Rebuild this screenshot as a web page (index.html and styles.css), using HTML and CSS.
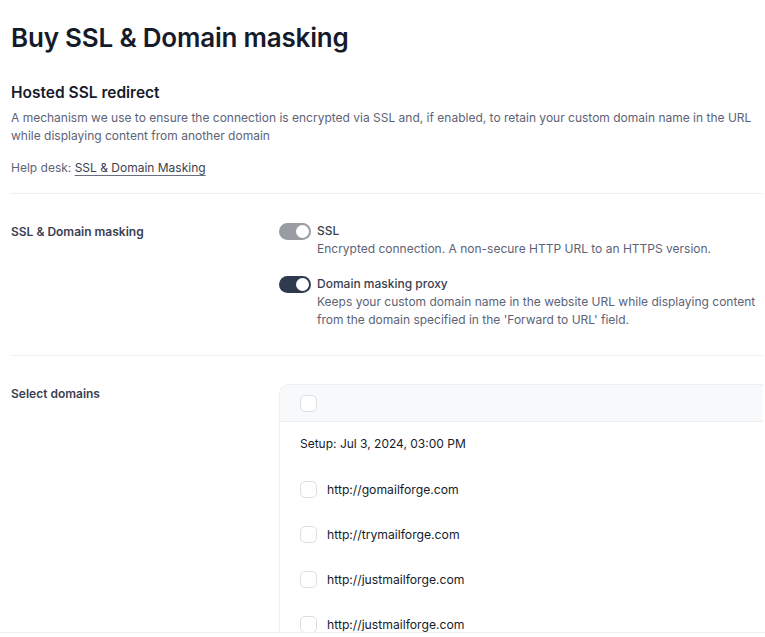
FILE: index.html
```html
<!DOCTYPE html>
<html lang="en">
<head>
  <meta charset="UTF-8">
  <meta name="viewport" content="width=device-width, initial-scale=1.0">
  <title>Buy SSL & Domain masking</title>
  <link rel="stylesheet" href="styles.css">
</head>
<body>
  <div class="page">
    <h1>Buy SSL &amp; Domain masking</h1>

    <section class="intro">
      <h2>Hosted SSL redirect</h2>
      <p>A mechanism we use to ensure the connection is encrypted via SSL and, if enabled, to retain your custom domain name in the URL while displaying content from another domain</p>
      <p class="help">Help desk: <a href="#">SSL &amp; Domain Masking</a></p>
    </section>

    <div class="row">
      <div class="row-label">SSL &amp; Domain masking</div>
      <div class="row-body options">
        <div class="option">
          <span class="toggle toggle-muted"><span class="knob"></span></span>
          <div class="option-text">
            <div class="option-title">SSL</div>
            <div class="option-desc">Encrypted connection. A non-secure HTTP URL to an HTTPS version.</div>
          </div>
        </div>
        <div class="option">
          <span class="toggle toggle-on"><span class="knob"></span></span>
          <div class="option-text">
            <div class="option-title">Domain masking proxy</div>
            <div class="option-desc">Keeps your custom domain name in the website URL while displaying content from the domain specified in the 'Forward to URL' field.</div>
          </div>
        </div>
      </div>
    </div>

    <div class="row row-domains">
      <div class="row-label">Select domains</div>
      <div class="row-body">
        <div class="domain-card">
          <div class="card-head">
            <span class="check"></span>
          </div>
          <div class="group-title">Setup: Jul 3, 2024, 03:00 PM</div>
          <ul class="domain-list">
            <li><span class="check"></span>http://gomailforge.com</li>
            <li><span class="check"></span>http://trymailforge.com</li>
            <li><span class="check"></span>http://justmailforge.com</li>
            <li><span class="check"></span>http://justmailforge.com</li>
          </ul>
        </div>
      </div>
    </div>
  </div>
  <div class="bottom-bar"></div>
</body>
</html>
```

FILE: styles.css
```css
:root {
  --text: #161b2b;
  --text-soft: #3b4150;
  --muted: #5d6376;
  --border: #eceef2;
  --toggle-dark: #2f3a4e;
  --toggle-grey: #9a9ca3;
}

* {
  margin: 0;
  padding: 0;
  box-sizing: border-box;
}

html, body {
  height: 100%;
  overflow: hidden;
}

body {
  font-family: Inter, "Noto Sans", sans-serif;
  color: var(--text);
  background: #fff;
  position: relative;
}

.page {
  padding: 20px 0 0 11px;
  width: 763px;
  overflow: hidden;
}

h1 {
  font-size: 26px;
  font-weight: 600;
  line-height: 36px;
  letter-spacing: -0.2px;
  margin-bottom: 27px;
}

.intro {
  padding-bottom: 16px;
  border-bottom: 1px solid var(--border);
}

.intro h2 {
  font-size: 15.5px;
  font-weight: 600;
  line-height: 20px;
  margin: 1px 0 6px;
}

.intro p {
  font-size: 12px;
  line-height: 18px;
  color: var(--muted);
}

.intro .help {
  margin-top: 14px;
}

.help a {
  color: var(--text-soft);
  text-decoration: underline;
  text-underline-offset: 3px;
  text-decoration-color: #6b7080;
}

.row {
  display: grid;
  grid-template-columns: 268px 1fr;
  padding: 28px 0 26px;
  border-bottom: 1px solid var(--border);
}

.row-domains {
  border-bottom: none;
  padding: 28px 0 0;
}

.row-label {
  font-size: 12px;
  font-weight: 600;
  color: var(--text-soft);
  line-height: 18px;
  padding-top: 1px;
}

.options {
  display: flex;
  flex-direction: column;
  gap: 17px;
}

.option {
  display: flex;
  gap: 6px;
  align-items: flex-start;
}

.toggle {
  width: 32px;
  height: 17px;
  border-radius: 9px;
  flex-shrink: 0;
  display: flex;
  align-items: center;
  justify-content: flex-end;
  padding: 2px;
  margin-top: 1px;
}

.toggle-muted {
  background: var(--toggle-grey);
}

.toggle-on {
  background: var(--toggle-dark);
}

.knob {
  width: 13px;
  height: 13px;
  border-radius: 50%;
  background: #fff;
}

.option-title {
  font-size: 12px;
  font-weight: 500;
  line-height: 18px;
  color: var(--text-soft);
}

.option-desc {
  font-size: 12px;
  line-height: 18px;
  color: var(--muted);
}

.domain-card {
  border: 1px solid var(--border);
  border-right: none;
  border-radius: 10px 0 0 10px;
  width: 500px;
  overflow: hidden;
}

.card-head {
  background: #f8f9fb;
  border-bottom: 1px solid var(--border);
  height: 37px;
  display: flex;
  align-items: center;
  padding-left: 20px;
}

.check {
  display: inline-block;
  width: 17px;
  height: 17px;
  border: 1px solid #dcdfe5;
  border-radius: 5px;
  background: #fff;
  flex-shrink: 0;
}

.group-title {
  font-size: 12px;
  color: var(--text);
  padding: 13px 20px 0;
  line-height: 18px;
}

.domain-list {
  list-style: none;
  padding: 14px 20px 0;
}

.domain-list li {
  display: flex;
  align-items: center;
  gap: 10px;
  height: 45px;
  font-size: 12.2px;
  color: var(--text);
}

.bottom-bar {
  position: absolute;
  left: 0;
  right: 0;
  bottom: 0;
  height: 5px;
  background: #fff;
  border-top: 1px solid var(--border);
}
```
